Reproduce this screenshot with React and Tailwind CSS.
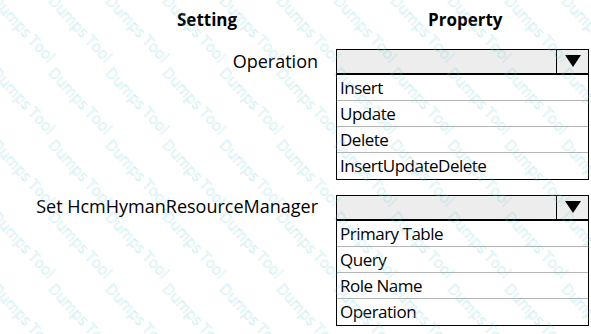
import React from "react";

const font = { fontFamily: '"Open Sans", "Noto Sans", sans-serif' };

function Dropdown({ items }) {
  return (
    <div className="w-[253px] border border-black bg-white">
      <div className="flex h-[25px] border-b-2 border-black bg-[#ededed]">
        <div className="flex-1" />
        <div className="flex w-[32px] items-center justify-center border-l border-black">
          <svg width="16" height="12" viewBox="0 0 16 12">
            <polygon points="0,0 16,0 8,12" fill="#000" />
          </svg>
        </div>
      </div>
      {items.map((t, i) => (
        <div
          key={t}
          className={`flex h-[26px] items-center pl-[3px] text-[17px] leading-none tracking-[-0.5px] text-black ${
            i < items.length - 1 ? "border-b border-[#b4b4b4]" : ""
          }`}
        >
          {t}
        </div>
      ))}
    </div>
  );
}

function Watermark() {
  const marks = [];
  for (let r = -1; r < 5; r++) {
    for (let c = -3; c < 11; c++) {
      marks.push(
        <span
          key={`${r}-${c}`}
          className="absolute whitespace-nowrap text-[15px] text-transparent"
          style={{
            left: c * 57 + 3,
            top: r * 72 + 62,
            transform: "rotate(47deg)",
            transformOrigin: "0 0",
            WebkitTextStroke: "0.5px rgba(110,205,215,0.4)",
          }}
        >
          Dumps Tool
        </span>
      );
    }
  }
  return <div className="pointer-events-none absolute inset-0 overflow-hidden">{marks}</div>;
}

export default function App() {
  return (
    <div className="relative h-[334px] w-[591px] overflow-hidden bg-white" style={font}>
      <div className="flex pt-[7px]">
        <div className="w-[336px] pl-[177px] text-[17px] font-bold text-black">Setting</div>
        <div className="w-[253px] pl-[92px] text-[17px] font-bold text-black">Property</div>
      </div>
      <div className="mt-[16px] flex">
        <div className="-mt-[1px] w-[318px] text-right text-[18px] text-black">Operation</div>
        <div className="ml-[18px]">
          <Dropdown items={["Insert", "Update", "Delete", "InsertUpdateDelete"]} />
        </div>
      </div>
      <div className="mt-[15px] flex">
        <div className="-mt-[2px] w-[318px] text-right text-[18px] text-black">
          Set HcmHymanResourceManager
        </div>
        <div className="ml-[18px]">
          <Dropdown items={["Primary Table", "Query", "Role Name", "Operation"]} />
        </div>
      </div>
      <Watermark />
    </div>
  );
}
